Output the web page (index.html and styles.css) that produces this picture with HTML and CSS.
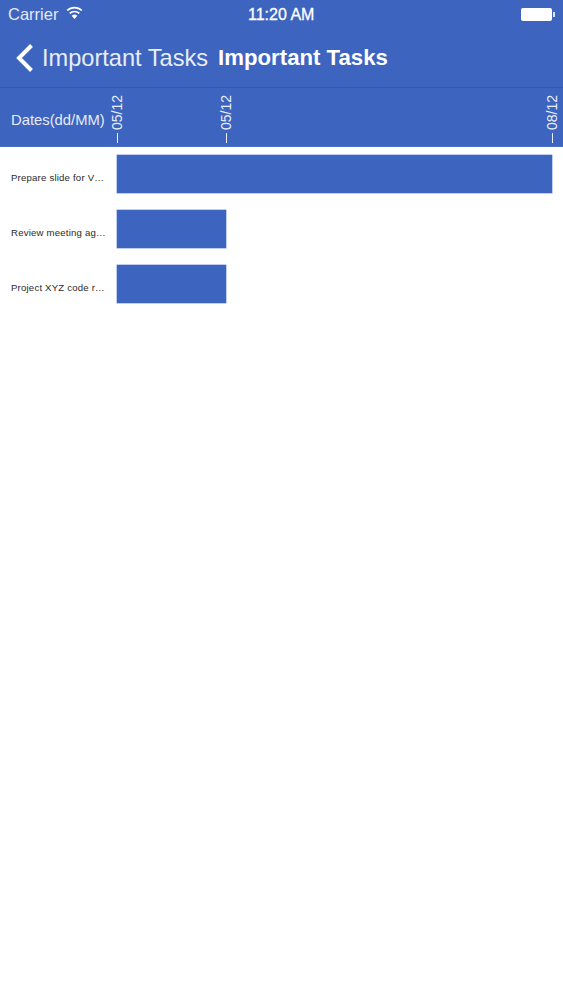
FILE: index.html
```html
<!DOCTYPE html>
<html lang="en">
<head>
<meta charset="utf-8">
<title>Important Tasks</title>
<link rel="stylesheet" href="styles.css">
</head>
<body>
<header class="top">
  <div class="status">
    <div class="status-left">
      <span class="carrier">Carrier</span>
      <svg class="wifi" width="17" height="14" viewBox="0 0 17 14"><path d="M8.500 13 5.700 9.700a4.200 4.200 0 0 1 5.600 0Z" fill="#fff"/><path d="M3.700 7.400a7 7 0 0 1 9.600 0" fill="none" stroke="#fff" stroke-width="1.700"/><path d="M1.200 4.500a10.600 10.600 0 0 1 14.600 0" fill="none" stroke="#fff" stroke-width="1.700"/></svg>
    </div>
    <span class="clock">11:20 AM</span>
    <div class="battery"><span class="cell"></span><span class="nub"></span></div>
  </div>
  <nav class="nav">
    <svg class="chev" width="20" height="30" viewBox="0 0 20 30"><path d="M16.500 2.500 4 15l12.500 12.500" fill="none" stroke="#fff" stroke-width="4"/></svg>
    <span class="back">Important Tasks</span>
    <span class="title">Important Tasks</span>
  </nav>
</header>
<section class="axis">
  <span class="axis-label">Dates(dd/MM)</span>
  <div class="ticks">
    <span class="tick tick-a">05/12</span>
    <span class="tick tick-b">05/12</span>
    <span class="tick tick-c">08/12</span>
  </div>
</section>
<main class="rows">
  <div class="row"><span class="name">Prepare slide for V…</span><div class="track"><div class="bar" style="width:435px"></div></div></div>
  <div class="row"><span class="name">Review meeting ag…</span><div class="track"><div class="bar" style="width:109px"></div></div></div>
  <div class="row"><span class="name">Project XYZ code r…</span><div class="track"><div class="bar" style="width:109px"></div></div></div>
</main>
</body>
</html>
```
FILE: styles.css
```css
* { box-sizing: border-box; }
html, body { margin: 0; padding: 0; height: 1000px; background: #fff; overflow: hidden; }
body { font-family: "Liberation Sans", Arial, sans-serif; color: #fff; }
.top { background: #3d64bf; height: 88px; border-bottom: 1px solid #3759ac; }
.status { display: flex; align-items: center; justify-content: space-between; height: 29px; padding: 0 8px; position: relative; }
.status-left { display: flex; align-items: center; gap: 8px; }
.carrier { font-size: 16.500px; color: #e4eaf7; }
.wifi { margin-top: -3px; }
.clock { position: absolute; left: 248px; top: 5px; font-size: 16px; line-height: 19px; -webkit-text-stroke: 0.3px #fff; }
.battery { display: flex; align-items: center; gap: 1px; margin-right: 0; }
.cell { width: 31px; height: 13px; background: #fff; border-radius: 2px; }
.nub { width: 2px; height: 5px; background: #dfe6f5; }
.nav { display: flex; align-items: center; height: 58px; padding-left: 15px; }
.back { font-size: 23.600px; margin-left: 7px; color: #e8edf8; }
.title { font-size: 22.200px; font-weight: 700; margin-left: 10px; }
.axis { background: #3d64bf; height: 59px; border-bottom: 1px solid #4a6fc6; display: flex; align-items: center; position: relative; padding-left: 11px; }
.axis-label { font-size: 14.800px; color: #e6ebf7; margin-top: 5px; }
.ticks { position: absolute; inset: 0; }
.tick { position: absolute; bottom: 16px; writing-mode: vertical-rl; transform: rotate(180deg); font-size: 14px; line-height: 14px; color: #e9eef9; white-space: nowrap; }
.tick::before { content: ""; position: absolute; top: -13px; left: 6px; width: 1px; height: 10px; background: #e9eef9; }
.tick-a { left: 110px; }
.tick-b { left: 219px; }
.tick-c { left: 545px; }
.rows { padding-top: 8px; display: flex; flex-direction: column; gap: 17px; }
.row { display: flex; align-items: center; height: 38px; padding-left: 11px; }
.name { width: 106px; font-size: 9.600px; letter-spacing: 0.2px; color: #2a2a2a; margin-top: 6px; white-space: nowrap; }
.bar { height: 38px; background: #3d64bf; box-shadow: 0 0 0 0.5px #7f9fe0; }
```
